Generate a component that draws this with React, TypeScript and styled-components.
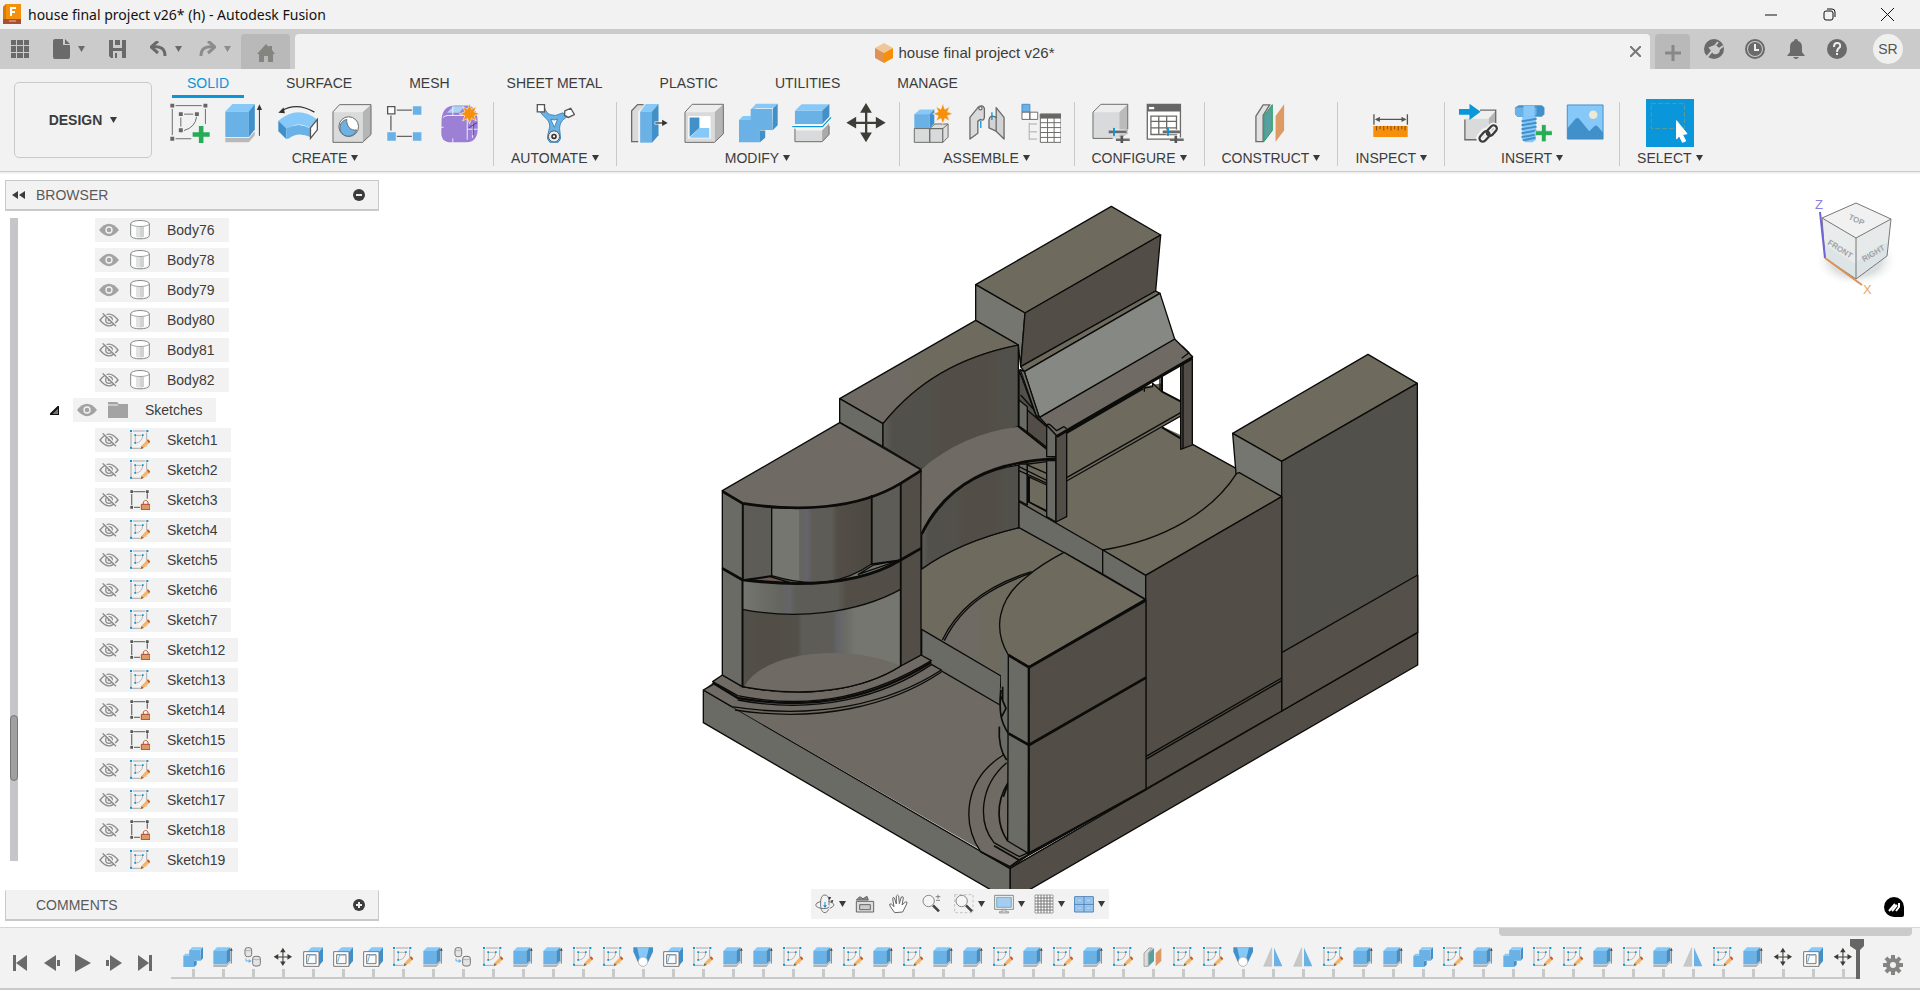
import React from 'react';
import styled, { createGlobalStyle } from 'styled-components';

const c = {
  chrome: '#f2f2f2',
  strip: '#cbcbcb',
  line: '#c8c9c9',
  ink: '#3c3c3c',
  accent: '#0a96da',
  icon: '#6a6a6a',
  top: '#86c9f9',
  front: '#6ab1e6',
  side: '#4290c9',
  grey: '#d9dadb',
  dark: '#6b6b68',
};

const GlobalStyle = createGlobalStyle`
  * { box-sizing: border-box; }
  html, body { margin: 0; padding: 0; }
  body { font-family: "Liberation Sans", Arial, sans-serif; font-size: 14px; line-height: 16px; color: ${c.ink}; background: #fff; }
  button { font: inherit; color: inherit; border: 0; padding: 0; margin: 0; background: none; cursor: pointer; }
  ul, ol { list-style: none; margin: 0; padding: 0; }
  svg { display: block; flex: none; }
`;

/* ---------- icons ---------- */

const Caret = ({ color = '#3a3a3a' }: { color?: string }) => (
  <svg width="7" height="6" viewBox="0 0 7 6"><path d="M0 0h7L3.5 6z" fill={color} /></svg>
);

const Plus = ({ x, y }: { x: number; y: number }) => (
  <path d={`M${x - 7} ${y - 26}h14v19h19v14h-19v19h-14v-19h-19v-14h19z`} fill="#27ab56" />
);

const Star = ({ x, y }: { x: number; y: number }) => (
  <path
    transform={`translate(${x} ${y})`}
    d="M0-32L6-14L21-22L14-6L31 0L14 6L21 22L6 14L0 31L-6 14L-21 22L-14 6L-31 0L-14-6L-21-22L-6-14Z"
    fill="#f78f0b" stroke="#f2f2f2" strokeWidth="2"
  />
);

const Sliders = () => (
  <g>
    <path d="M58 88h44M72 112h38" stroke="#f2f2f2" strokeWidth="14" />
    <path d="M50 88h54M72 112h42" stroke="#6b6b6b" strokeWidth="8" />
    <path d="M66 76v24" stroke={c.accent} strokeWidth="6" />
    <path d="M90 100v24" stroke="#555" strokeWidth="8" />
  </g>
);

const MoveShape = () => (
  <g fill="#3d3d38" stroke="none">
    <path d="M57 18h7v84h-7zM18 57h84v7H18z" />
    <path d="M60 0l18 30H42zM60 120l18-30H42zM0 60l30-18v36zM120 60L90 42v36z" />
  </g>
);

const CombineShape = () => (
  <g>
    <path d="M2 52L14 40H38V20L54 2H120L106 16H52V52z" fill={c.top} />
    <path d="M106 16L120 2V68L104 84H82V106L66 120V84L82 84H104z" fill={c.side} />
    <path d="M38 18h66v64H66v38H2V52h36z" fill={c.front} />
  </g>
);

const ribbonIcons: Record<string, React.ReactNode> = {
  sketch: (
    <g fill="none" stroke={c.dark} strokeWidth="3">
      <path d="M16 8h80M6 18v80M107 18v46M16 109h48M42 34h28M32 44v28M80 42Q76 74 42 84" />
      <g fill="#666" stroke="none">
        <path d="M0 2h12v12H0zM101 2h12v12h-12zM0 103h12v12H0zM26 28h12v12H26zM75 28h12v12H75zM26 77h12v12H26z" />
      </g>
      <g stroke="none"><Plus x={94} y={96} /></g>
    </g>
  ),
  extrude: (
    <g>
      <path d="M3 107h72l18-21v12l-18 22H3z" fill="#b9b9b9" />
      <path d="M3 26L25 3h68L75 26z" fill={c.top} />
      <path d="M3 26h72v78H3z" fill={c.front} />
      <path d="M75 26L93 3v78l-18 23z" fill={c.side} />
      <path d="M107 100V14" stroke="#333" strokeWidth="3" /><path d="M107 4l8 17H99z" fill="#333" />
    </g>
  ),
  revolve: (
    <g>
      <path d="M0 54Q58 4 119 50L98 78Q62 52 24 80z" fill={c.top} />
      <path d="M0 54L24 78V110L0 86z" fill={c.side} />
      <path d="M24 78Q62 56 98 78V104Q60 86 32 108L24 110z" fill={c.front} />
      <path d="M98 76L119 50V82L98 108z" fill="#fff" stroke="#555" strokeWidth="4" />
      <path d="M10 24Q56-4 110 28" fill="none" stroke="#333" strokeWidth="4" /><path d="M0 30L16 14l4 17z" fill="#333" />
    </g>
  ),
  hole: (
    <g stroke={c.dark} strokeWidth="3">
      <path d="M2 26L22 5H118L92 28z" fill="#ededed" stroke="none" />
      <path d="M92 28L118 5V96L92 121z" fill="#b5b5b5" stroke="none" />
      <path d="M2 28h90v92H2z" fill={c.grey} stroke="none" />
      <path d="M2 120V27L22 5H118V96L92 120z" fill="none" />
      <circle cx="50" cy="72" r="30" fill="#fff" />
      <path d="M44 50A26 26 0 1 0 74 82C56 86 42 70 44 50z" fill={c.front} />
    </g>
  ),
  pattern: (
    <g fill={c.front}>
      <path d="M32 22h46M32 102h46M14 38v46" stroke="#666" strokeWidth="4" />
      <path d="M81 10h26v26H81zM3 89h26v26H3zM81 89h26v26H81z" />
      <path d="M4 11h22v22H4z" fill="#fff" stroke="#555" strokeWidth="4" />
    </g>
  ),
  form: (
    <g>
      <path d="M4 48Q8 8 46 8H90Q114 20 114 60V82Q112 118 80 120H24Q2 114 3 90z" fill="#9b7ed4" />
      <path d="M20 30L40 10H74L58 30z" fill="#a9d3f2" />
      <path d="M8 46H80V112H8z" fill="#9c80d6" />
      <path d="M8 44Q14 38 24 38H70Q82 38 82 48V112M38 38V10M38 120V108M2 74H10M82 80H114M98 62V106" fill="none" stroke="#f0ecfa" strokeWidth="3" />
      <path d="M86 76L112 60M100 62V98" stroke="#5436a5" strokeWidth="3" />
      <Star x={89} y={33} />
    </g>
  ),
  automate: (
    <g stroke="#3c88bb" strokeWidth="3">
      <path d="M16 16L28 14C36 40 52 36 62 38L84 30L98 42C82 50 74 62 74 78L76 98A20 20 0 1 1 38 98L44 72C44 48 26 46 16 28z" fill={c.front} />
      <path d="M47 50Q58 54 68 49L58 74z" fill="#fff" />
      <circle cx="57" cy="102" r="17" fill="#eee" stroke="#555" /><circle cx="57" cy="102" r="6" fill="#fff" stroke="#333" strokeWidth="5" />
      <path d="M6 5h22v22H6zM90 24l18-8 11 19-18 9-12-6z" fill="#fff" stroke="#555" strokeWidth="4" />
    </g>
  ),
  presspull: (
    <g>
      <path d="M4 22L24 4H48L24 26V120H4z" fill={c.grey} /><path d="M40 5H22L4 24V118H24" fill="none" stroke={c.dark} strokeWidth="4" />
      <path d="M30 26L48 3H86L66 26z" fill={c.top} /><path d="M30 26H66V121H30z" fill={c.front} /><path d="M66 26L86 3V98L66 121z" fill={c.side} />
      <path d="M74 61h26" stroke="#fff" strokeWidth="9" /><path d="M76 61h26" stroke="#333" strokeWidth="4" /><path d="M97 51l17 10-17 9z" fill="#333" />
    </g>
  ),
  shell: (
    <g>
      <path d="M2 28L24 4H119L92 28z" fill="#ededed" /><path d="M92 28L119 4V94L92 120z" fill="#b5b5b5" /><path d="M2 28H92V120H2z" fill={c.grey} />
      <path d="M2 120V28L24 4H119V94L92 120z" fill="none" stroke={c.dark} strokeWidth="3" />
      <path d="M12 40H80V108H12z" fill="#fff" /><path d="M16 44H46V76L16 104z" fill={c.side} /><path d="M16 106L46 76H76V106z" fill={c.top} />
    </g>
  ),
  combine: <CombineShape />,
  split: (
    <g>
      <path d="M8 24L28 4H113L91 24z" fill={c.top} /><path d="M8 24H91V64H8z" fill={c.front} /><path d="M91 24L113 3V42L91 64z" fill={c.side} />
      <path d="M8 84H91L112 62V96L91 118H8z" fill={c.grey} /><path d="M91 84L112 62V96L91 118z" fill="#aaa" /><path d="M8 78V118H91L112 96V70" fill="none" stroke={c.dark} strokeWidth="3" />
      <path d="M0 72H92L118 44" fill="none" stroke="#fff" strokeWidth="10" /><path d="M0 72H92L118 44" fill="none" stroke={c.accent} strokeWidth="4" />
    </g>
  ),
  move: <MoveShape />,
  component: (
    <g>
      <path d="M3 34L20 20H66L50 34z" fill={c.top} /><path d="M3 34H50V78H3z" fill={c.front} /><path d="M50 34L64 20V62L50 78z" fill={c.side} />
      <path d="M3 78H50V120H3zM50 78H90V120H50z" fill={c.grey} stroke={c.dark} strokeWidth="3" /><path d="M50 78L66 64H106V104L90 120V78z" fill="#dedede" stroke={c.dark} strokeWidth="3" /><path d="M50 78h40l16-14" fill="none" stroke={c.dark} strokeWidth="3" />
      <Star x={90} y={33} />
    </g>
  ),
  joint: (
    <g stroke={c.dark} strokeWidth="4" strokeLinejoin="round">
      <path d="M8 44L34 12Q46 4 52 16V44Q50 56 40 50L32 56V92L8 110z" fill={c.grey} />
      <path d="M112 44L88 14V44L78 40Q68 40 66 52V76L88 86L112 110z" fill="#d2d3d4" />
      <path d="M88 42V88" /><circle cx="40" cy="16" r="5" fill="#fff" />
      <path d="M41 54V76M75 28V52" stroke={c.accent} />
    </g>
  ),
  assembly: (
    <g fill="none" stroke={c.dark} strokeWidth="3">
      <path d="M2 4H26V28H2z" fill={c.front} stroke={c.side} /><path d="M2 28H26V50H2zM26 28H50V50H26z" fill="#fff" />
      <path d="M24 60V112M24 64H48M24 88H48M24 110H48" stroke="#aaa" />
      <path d="M58 34H121V120H58z" fill="#fff" /><path d="M58 34H121V46H58z" fill="#666" />
      <path d="M58 60H121M58 75H121M58 90H121M58 105H121M80 46V120M100 46V120" />
    </g>
  ),
  configure: (
    <g>
      <path d="M2 28L26 4H108L82 28z" fill="#ededed" /><path d="M82 28L108 4V94L82 110z" fill="#bbb" /><path d="M2 28H82V108H2z" fill={c.grey} />
      <path d="M2 108V28L26 4H108V80M2 108H62" fill="none" stroke={c.dark} strokeWidth="3" />
      <Sliders />
    </g>
  ),
  table: (
    <g>
      <path d="M3 4H104V110H3z" fill="#fff" stroke={c.dark} strokeWidth="4" /><path d="M3 4H104V26H3z" fill="#666" /><path d="M8 12H24V19H8z" fill="#fff" />
      <path d="M14 40H92V96H14zM14 56H92M14 76H92M38 40V96M62 40V96" fill="none" stroke={c.dark} strokeWidth="4" />
      <Sliders />
    </g>
  ),
  plane: (
    <g>
      <path d="M14 40L36 6H56L36 38V118H14z" fill="#e2e2e2" stroke={c.dark} strokeWidth="4" />
      <path d="M38 40L64 5V84L38 118z" fill="#58a0a0" stroke="#27a060" strokeWidth="3" /><path d="M74 40L100 4V84L74 118z" fill="#dd9a64" />
    </g>
  ),
  measure: (
    <g>
      <path d="M8 34V66M110 34V66M14 50H104" stroke="#555" strokeWidth="4" /><path d="M11 50L26 42V58zM107 50L92 42V58z" fill="#555" />
      <path d="M6 70H111V104H6z" fill="#f78f0b" /><path d="M16 70V84M27 70V80M38 70V84M49 70V80M60 70V84M71 70V80M82 70V84M93 70V80M103 70V84" stroke="#774d18" strokeWidth="3" />
    </g>
  ),
  derive: (
    <g>
      <path d="M20 48L46 24H114L92 48z" fill="#efefef" /><path d="M92 48L114 24V90L92 112z" fill="#b5b5b5" /><path d="M20 48H92V112H20z" fill={c.grey} />
      <path d="M66 22H114V72M20 50V112H60" fill="none" stroke={c.dark} strokeWidth="4" />
      <path d="M2 18H34V2L68 27L34 52V36H2z" fill={c.accent} />
      <g fill="none" stroke="#f2f2f2" strokeWidth="17"><rect x="60" y="90" width="38" height="20" rx="10" transform="rotate(-48 79 100)" /><rect x="84" y="74" width="36" height="20" rx="10" transform="rotate(-48 102 84)" /></g>
      <g fill="none" stroke="#3a3a3a" strokeWidth="7"><rect x="62" y="92" width="36" height="20" rx="10" transform="rotate(-48 80 102)" /><rect x="84" y="74" width="36" height="20" rx="10" transform="rotate(-48 102 84)" /></g>
    </g>
  ),
  bolt: (
    <g>
      <path d="M8 14L20 7H90L98 14V34L90 42H16L8 34z" fill={c.side} /><path d="M8 14H74V34L66 42H16L8 34z" fill={c.front} /><path d="M34 8H68V42H34z" fill={c.top} />
      <path d="M30 42H72V112L62 120H40L30 112z" fill={c.top} />
      <path d="M28 56L74 48M28 68L74 60M28 80L74 72M28 92L74 84M28 104L74 96M32 114L70 106" stroke={c.side} strokeWidth="6" />
      <g stroke="#f2f2f2" strokeWidth="2"><Plus x={96} y={92} /></g>
    </g>
  ),
  image: (
    <g>
      <path d="M3 6H112V110H3z" fill={c.top} /><circle cx="82" cy="36" r="13" fill="#eee9d4" />
      <path d="M3 78L28 48Q36 42 42 52L70 86L86 70Q92 66 96 72L112 90V110H3z" fill={c.side} /><path d="M3 6H112V110H3z" fill="none" stroke={c.side} strokeWidth="3" />
    </g>
  ),
  select: (
    <g>
      <path d="M3 2H104V78H3z" fill="none" stroke="#5f9d92" strokeWidth="3" strokeDasharray="14 7" />
      <path d="M80 54L112 94L98 96L108 116L98 120L88 100L80 110z" fill="#fff" stroke="#fff" strokeWidth="3" />
    </g>
  ),
};

const smallIcons: Record<string, React.ReactNode> = {
  extrude: (
    <g>
      <path d="M1 53H40L52 40V46L40 60H1z" fill="#b5b5b5" /><path d="M1 12L12 1H52L40 12z" fill={c.top} /><path d="M1 12H40V52H1z" fill={c.front} /><path d="M40 12L52 1V40L40 52z" fill={c.side} />
      <path d="M55 50V6" stroke="#444" strokeWidth="2" /><path d="M55 2l4 9h-8z" fill="#444" />
    </g>
  ),
  sketch: (
    <g fill="none" stroke="#999" strokeWidth="2">
      <path d="M16 16H38Q38 36 16 40z" /><path d="M3 55H30M3 8V50M9 3H46M50 8V50" stroke="#858585" />
      <g fill={c.accent} stroke="none"><path d="M0 0h6v6H0zM49 0h6v6h-6zM0 50h6v6H0zM13 13h5v5h-5zM36 13h5v5h-5zM13 36h5v5h-5z" /></g>
      <path d="M33 48L50 30L60 38L42 54L30 58z" fill="#f4b566" stroke="#f2f2f2" /><path d="M50 31L54 28L61 35L57 40z" fill="#bd5b32" stroke="none" /><path d="M35 49L41 54L31 58z" fill="#666" stroke="none" />
    </g>
  ),
  locked: (
    <g fill="none" stroke="#777" strokeWidth="4">
      <path d="M10 5H46M5 12V46M52 10V26M12 52H30" />
      <path d="M1 1h8v8H1zM48 1h8v8h-8zM1 48h8v8H1z" fill="#555" stroke="none" />
      <path d="M40 44V36Q47 26 54 36V44" stroke="#b5623c" strokeWidth="3" /><path d="M34 43H60V59H34z" fill="#dd9a64" stroke="#b04a26" strokeWidth="3" />
    </g>
  ),
  body: (
    <g>
      <path d="M2 12C2-2 58-2 58 12V46C58 60 2 60 2 46z" fill="#fff" stroke="#888" strokeWidth="3" /><path d="M18 20H42V51Q30 54 18 51z" fill="#e0e2e4" /><path d="M30 20H42V51L30 52z" fill="#d0d2d4" />
      <path d="M2 12C6 22 54 22 58 12" fill="none" stroke="#777" strokeWidth="2" />
    </g>
  ),
  combine: <g transform="scale(.5)"><CombineShape /></g>,
  move: <g transform="translate(2 2) scale(.46)"><MoveShape /></g>,
  paste: (
    <g fill="#e4e4e4" stroke="#777" strokeWidth="3">
      <rect x="6" y="2" width="20" height="27" rx="7" /><rect x="29" y="28" width="23" height="29" rx="7" />
      <path d="M7 9Q16 14 25 9M30 36Q40 41 51 36" fill="none" stroke="#999" strokeWidth="2" />
      <path d="M9 34V42H18" fill="none" stroke={c.front} /><path d="M17 36l9 6-9 6z" fill={c.front} stroke="none" />
    </g>
  ),
  frame: (
    <g>
      <path d="M12 14L26 1H60L46 14z" fill={c.top} /><path d="M48 14L60 1V42L48 56z" fill={c.side} />
      <path d="M2 14H48V58H2z" fill="#fff" stroke="#777" strokeWidth="3" /><path d="M11 23H39V50H11z" fill="#fafafa" stroke="#777" strokeWidth="3" /><path d="M14 46L20 24H36" fill="none" stroke={c.front} strokeWidth="3" />
    </g>
  ),
  loft: (
    <g>
      <path d="M1 1H60V14L46 44H14L1 14z" fill={c.side} /><path d="M12 1H48L40 34H20z" fill={c.top} /><circle cx="30" cy="44" r="14" fill="#fff" stroke="#999" strokeWidth="2" />
    </g>
  ),
  mirror: <g><path d="M26 2V58H2z" fill="#c8c8c8" stroke="#aaa" /><path d="M33 2L58 58H33z" fill={c.front} /></g>,
  plane: (
    <g>
      <path d="M3 18L18 3H28L16 18V58H3z" fill="#ddd" stroke="#888" strokeWidth="2" /><path d="M17 18L33 3V42L17 58z" fill="#58a0a0" /><path d="M38 18L55 3V42L38 58z" fill="#dd9a64" />
    </g>
  ),
};

const RibbonIcon = ({ name }: { name: string }) => (
  <svg width="40" height="40" viewBox="0 0 120 122" aria-hidden="true">{ribbonIcons[name]}</svg>
);
const SmallIcon = ({ name }: { name: string }) => (
  <svg width="20" height="20" viewBox="0 0 60 60" aria-hidden="true">{smallIcons[name]}</svg>
);

const Eye = ({ off }: { off?: boolean }) => (
  <svg width="20" height="14" viewBox="0 0 60 42" aria-hidden="true">
    {off ? (
      <g fill="none" stroke="#8c8c8c" strokeWidth="4">
        <path d="M3 21Q30-14 57 21Q30 56 3 21z" /><circle cx="30" cy="21" r="10" /><circle cx="30" cy="21" r="2" /><path d="M15 0L55 39" stroke="#f2f2f2" strokeWidth="4" /><path d="M11 1L51 40" />
      </g>
    ) : (
      <g><path d="M0 21Q30-16 60 21Q30 58 0 21z" fill="#a3a3a3" /><circle cx="30" cy="21" r="9" fill="#a3a3a3" stroke="#f2f2f2" strokeWidth="4" /></g>
    )}
  </svg>
);

/* ---------- window chrome ---------- */

const Page = styled.div`display: flex; flex-direction: column; min-height: 100vh; background: #fff;`;

const TitleBar = styled.header`
  display: flex; align-items: center; justify-content: space-between; height: 29px; padding: 0 4px 0 3px; background: ${c.chrome};
`;
const WindowTitle = styled.div`
  display: flex; align-items: center; gap: 6px; font-family: "Noto Sans", "Open Sans", sans-serif; font-size: 14px; color: #111;
`;
const WindowControls = styled.div`display: flex;`;
const WindowButton = styled.button`width: 58px; height: 28px; display: grid; place-items: center;`;

const AppBar = styled.div`display: flex; align-items: stretch; height: 40px; padding-top: 5px; background: ${c.strip};`;
const QuickTools = styled.div`display: flex; align-items: center; gap: 24px; padding: 0 10px 5px 11px;`;
const QuickButton = styled.button`display: flex; align-items: center; gap: 8px; height: 20px;`;
const UndoPair = styled.div`display: flex; gap: 17px;`;
const StripTab = styled.button<{ $width: number }>`
  width: ${p => p.$width}px; padding-top: 3px; display: grid; place-items: center; background: #b9b9b9; border-radius: 4px 4px 0 0;
`;
const DocTab = styled.div`
  flex: 1; margin: 0 5px; padding-right: 16px; display: flex; align-items: center; justify-content: center; position: relative;
  background: ${c.chrome}; border-radius: 4px 4px 0 0;
`;
const DocName = styled.div`display: flex; align-items: center; gap: 6px; padding-top: 2px; font-size: 15px;`;
const CloseTab = styled.button`position: absolute; right: 9px; top: 12px;`;
const Account = styled.div`display: flex; align-items: center; gap: 21px; padding: 0 17px 5px 14px;`;
const Avatar = styled.button`width: 30px; height: 30px; margin-left: 5px; border-radius: 50%; background: #f0f0ee; color: #555;`;

/* ---------- ribbon ---------- */

const Ribbon = styled.div`
  display: flex; align-items: flex-start; height: 105px; background: ${c.chrome};
  border-bottom: 2px solid ${c.chrome}; box-shadow: inset 0 -1px 0 ${c.line};
`;
const Workspace = styled.button`
  display: flex; align-items: center; justify-content: center; gap: 8px; width: 138px; height: 76px; margin: 13px 5px 0 14px;
  border: 1px solid #c6cac9; border-radius: 5px; font-weight: bold;
`;
const RibbonTabs = styled.div`display: flex; gap: 27px; padding-left: 15px; height: 30px;`;
const RibbonTab = styled.button<{ $active?: boolean }>`
  height: 29px; padding: 1px 15px 0; color: ${p => (p.$active ? c.accent : c.ink)};
  border-bottom: 3px solid ${p => (p.$active ? c.accent : 'transparent')};
`;
const Groups = styled.div`display: flex; padding-top: 3px;`;
const Group = styled.section`
  display: flex; flex-direction: column; align-items: center; justify-content: space-between; height: 64px; padding: 1px 13px 0;
  border-right: 1px solid ${c.line};
  &:last-child { border-right: 0; }
`;
const GroupIcons = styled.div`display: flex; gap: 14px; height: 40px;`;
const ToolButton = styled.button<{ $active?: boolean }>`
  display: grid; place-items: center; width: ${p => (p.$active ? 48 : 40)}px; height: ${p => (p.$active ? 48 : 40)}px;
  margin-top: ${p => (p.$active ? -4 : 0)}px; background: ${p => (p.$active ? c.accent : 'none')};
`;
const GroupLabel = styled.button`display: flex; align-items: center; gap: 4px; padding: 0 4px;`;

const groups: { label: string; icons: string[] }[] = [
  { label: 'CREATE', icons: ['sketch', 'extrude', 'revolve', 'hole', 'pattern', 'form'] },
  { label: 'AUTOMATE', icons: ['automate'] },
  { label: 'MODIFY', icons: ['presspull', 'shell', 'combine', 'split', 'move'] },
  { label: 'ASSEMBLE', icons: ['component', 'joint', 'assembly'] },
  { label: 'CONFIGURE', icons: ['configure', 'table'] },
  { label: 'CONSTRUCT', icons: ['plane'] },
  { label: 'INSPECT', icons: ['measure'] },
  { label: 'INSERT', icons: ['derive', 'bolt', 'image'] },
  { label: 'SELECT', icons: ['select'] },
];
const tabs = ['SOLID', 'SURFACE', 'MESH', 'SHEET METAL', 'PLASTIC', 'UTILITIES', 'MANAGE'];

/* ---------- viewport ---------- */

const Viewport = styled.main`flex: 1; display: flex; position: relative; background: #fff;`;
const ModelSvg = styled.svg`position: absolute; left: 0; top: 0; width: 100%; height: calc(100% - 38px); overflow: hidden;`;
const Sidebar = styled.aside`position: relative; display: flex; flex-direction: column; width: 374px; margin: 6px 0 6px 5px;`;
const PanelBar = styled.div<{ $open?: boolean }>`
  display: flex; align-items: center; height: 31px; padding: 0 13px 0 6px; background: ${c.chrome}; color: #5a5a5a;
  border: 1px solid ${c.line}; border-bottom-width: 2px; border-top-color: ${p => (p.$open ? c.line : c.chrome)};
`;
const CollapseSlot = styled.button`width: 24px; display: flex;`;
const PanelTitle = styled.h2`flex: 1; margin: 0; font-size: 14px; font-weight: normal;`;
const TreeArea = styled.div`flex: 1; display: flex; padding: 7px 0 12px 5px;`;
const TreeScroll = styled.div`width: 8px; margin-bottom: 17px; padding-top: 497px; background: #c5c5ca;`;
const TreeThumb = styled.div`height: 66px; background: #a0a0a0; border: 1px solid #777; border-radius: 4px;`;
const TreeList = styled.ul`display: flex; flex-direction: column; gap: 6px; padding-left: 15px;`;
const TreeItem = styled.li<{ $parent?: boolean }>`
  display: flex; align-items: center; height: 24px; padding-left: ${p => (p.$parent ? 0 : 62)}px;
`;
const Expander = styled.button`display: flex; width: 23px; margin-left: 17px;`;
const TreeNode = styled.div`display: flex; align-items: center; height: 24px; min-width: 134px; padding: 0 13px 0 4px; background: ${c.chrome};`;
const EyeButton = styled.button`display: flex; margin-right: 11px;`;
const NodeName = styled.button`margin-left: 17px; white-space: nowrap;`;

const NavBar = styled.div`
  position: absolute; left: 50%; bottom: 8px; transform: translateX(-50%); display: flex; align-items: center; gap: 9px;
  height: 30px; padding: 0 4px; background: ${c.chrome};
`;
const NavButton = styled.button<{ $caret?: boolean }>`
  display: flex; align-items: center; gap: 4px; margin-right: ${p => (p.$caret ? 0 : 4)}px;
`;
const CubeSvg = styled.svg`position: absolute; right: 20px; top: 16px;`;
const Assistant = styled.button`
  position: absolute; right: 16px; bottom: 10px; width: 20px; height: 20px; border-radius: 10px 10px 2px 10px; background: #000;
  display: grid; place-items: center;
`;

type Node = { name: string; icon: string; hidden?: boolean; parent?: boolean };
const locked = [3, 12, 14, 15, 18];
const tree: Node[] = [
  ...[76, 78, 79, 80, 81, 82].map(n => ({ name: `Body${n}`, icon: 'body', hidden: n >= 80 })),
  { name: 'Sketches', icon: 'folder', parent: true },
  ...[1, 2, 3, 4, 5, 6, 7, 12, 13, 14, 15, 16, 17, 18, 19].map(n => ({
    name: `Sketch${n}`, icon: locked.includes(n) ? 'locked' : 'sketch', hidden: true,
  })),
];

const T = '#6e6a5e';
const W = '#6f6a63';
const D = '#524d46';
const O = '#52504a';
const G = '#6a6b65';
const L = '#757670';

const Model = () => (
  <ModelSvg viewBox="-2100 -48 5760 2145" preserveAspectRatio="xMidYMin slice" aria-label="Model">
    <defs>
      <linearGradient id="drum" x1="0" x2="1">
        <stop offset="0" stopColor={L} /><stop offset=".27" stopColor={L} /><stop offset=".28" stopColor="#64655f" /><stop offset=".36" stopColor="#64646a" />
        <stop offset=".41" stopColor="#5d5c56" /><stop offset=".6" stopColor="#5d5c56" /><stop offset=".66" stopColor={D} /><stop offset="1" stopColor="#4d4942" />
      </linearGradient>
      <linearGradient id="band" x1="0" x2="1">
        <stop offset="0" stopColor={L} /><stop offset=".24" stopColor="#64655f" /><stop offset=".3" stopColor="#64646a" /><stop offset=".34" stopColor="#5d5c56" /><stop offset=".6" stopColor="#5d5c56" /><stop offset=".66" stopColor={D} /><stop offset="1" stopColor={D} />
      </linearGradient>
      <linearGradient id="inside" x1="0" x2="1">
        <stop offset="0" stopColor={O} /><stop offset=".15" stopColor={D} /><stop offset=".35" stopColor={O} /><stop offset=".38" stopColor="#5d5c56" /><stop offset=".57" stopColor="#5d5c56" /><stop offset=".6" stopColor="#64646a" /><stop offset=".65" stopColor={G} /><stop offset=".72" stopColor={L} /><stop offset="1" stopColor={L} />
      </linearGradient>
      <linearGradient id="niche" x1="0" x2="1">
        <stop offset="0" stopColor="#5d5c56" /><stop offset=".07" stopColor={O} /><stop offset=".36" stopColor={O} /><stop offset=".44" stopColor={D} /><stop offset=".75" stopColor={D} /><stop offset=".85" stopColor={O} /><stop offset="1" stopColor={O} />
      </linearGradient>
      <linearGradient id="warm" x1="0" x2="1"><stop offset="0" stopColor={W} /><stop offset=".35" stopColor={W} /><stop offset=".5" stopColor={T} /><stop offset="1" stopColor={T} /></linearGradient>
    </defs>
    <g stroke="#0b0b0a" strokeWidth="4" strokeLinejoin="round" fill="none">
      {/* base slab */}
      <path d="M930 2035L2153 1327V1425L930 2133z" fill={D} />
      <path d="M10 1500L930 2035V2133L10 1598z" fill={G} />
      <path d="M10 1500L67 1460L665 1137L957 1013L1400 1200L1337 1797L930 2030z" fill={W} stroke="none" />
      {/* courtyard floor */}
      <path d="M665 1137Q780 1055 957 1013L1400 1230L1000 1530L665 1320z" fill={T} stroke="none" />
      <path d="M727 1350C780 1240 880 1180 995 1145L1000 1540L903 1458z" fill="url(#warm)" stroke="none" />
      <path d="M665 1137Q780 1055 957 1013M727 1350C780 1240 880 1180 995 1145" />
      <path d="M733 1352C790 1236 890 1186 990 1150" />
      <path d="M665 1318L903 1458L900 1545L665 1408z" fill={G} />
      {/* upper floor */}
      <path d="M957 935V700L1160 620L1385 580L1390 606L1442 634V745L1478 763L1610 835L1610 850C1540 960 1400 1050 1208 1080z" fill={T} stroke="none" />
      <path d="M1478 763L1608 835" />
      {/* rear block */}
      <path d="M827 284L1234 49L1382 135L975 369z" fill={T} />
      <path d="M827 284L975 369L962 530L955 465L827 391z" fill={L} />
      <path d="M975 369L1382 135L1367 303L962 530z" fill={D} />
      {/* niche block */}
      <path d="M419 626L827 391L955 465C780 500 650 575 549 701z" fill="url(#warm)" />
      <path d="M419 626L549 701V770L419 697z" fill={G} />
      <path d="M549 701C650 575 780 500 955 465V710L800 760L663 838L549 770z" fill="url(#niche)" />
      <path d="M663 838Q790 730 955 710L1068 800C880 815 740 870 665 1030z" fill={W} stroke="none" />
      <path d="M955 710L1068 800" />
      <path d="M665 1035C740 890 850 840 957 825V1013Q780 1055 665 1137z" fill="url(#niche)" />
      <path d="M665 1032C740 875 880 815 1068 806" strokeWidth="8" />
      <path d="M957 935L1208 1080V1152L957 1013z" fill={G} />
      {/* bench frame */}
      <path d="M957 540L1010 682L1070 735V800L957 710z" fill={O} />
      <path d="M982 660L1040 710V772L982 726z" fill={D} />
      <path d="M957 630L982 650V726L957 708zM957 822H982V945L957 932z" fill={G} />
      <path d="M985 822L1040 815V850L985 826zM985 860L1040 885V962L985 935z" fill={T} />
      <path d="M957 830L1068 885M957 842L1068 892M985 935L1040 965M982 820V945M988 860V935M962 615L1070 735" />
      <path d="M1040 705L1068 735V800H1040zM1040 812H1068V996L1040 980z" fill={G} />
      <path d="M1068 740L1100 715V980L1068 996z" fill={D} />
      <path d="M1386 562L1442 532V632L1386 605zM1388 710L1442 680V735z" fill="#fff" stroke="none" />
      <path d="M1386 605L1442 634M1386 712L1442 745M1386 560V605" strokeWidth="6" />
      <path d="M1380 565V600M1358 578V590L1333 594V605M1358 580L1386 606" />
      <path d="M1100 863L1442 668M1100 873L1442 678" />
      <path d="M1442 515L1477 500V765L1442 778z" fill={D} />
      <path d="M1449 510V775" />
      <path d="M962 530L1367 303L1380 310L973 545z" fill={T} />
      <path d="M1018 682L1424 447L1478 500L1070 737L1040 705z" fill={W} />
      <path d="M1070 740L1478 505M1100 728L1330 595" strokeWidth="7" />
      <path d="M1040 705Q1046 700 1052 706L1070 722L1092 710L1100 716M1446 468L1467 488L1445 505" strokeWidth="4" />
      <path d="M973 545L1380 310L1424 447L1018 682z" fill="#868983" />
      <path d="M960 538L973 545L1018 682L1008 675z" fill={G} />
      {/* right tower */}
      <path d="M1598 730L2004 493L2152 580L1745 814z" fill={T} />
      <path d="M1598 730L1745 814V920L1608 850z" fill={L} />
      <path d="M1745 814L2152 580L2153 1327L1745 1563z" fill={O} />
      <path d="M1745 1388L2153 1155V1327L1745 1563z" fill="#55514a" />
      {/* middle block */}
      <path d="M1208 1080C1400 1050 1540 960 1610 850L1618 848L1745 920L1337 1156z" fill={T} />
      <path d="M1208 1080L1337 1156V1228L1208 1152z" fill={G} />
      <path d="M1337 1156L1745 920V1563L1337 1797z" fill={D} />
      <path d="M1337 1700L1745 1464M1337 1708L1745 1472" />
    </g>
    <g transform="translate(-30 1050)" stroke="#0b0b0a" strokeWidth="4" strokeLinejoin="round" fill="none">
      {/* curved steps by the bay */}
      <path d="M40 450L97 405L693 345L724 375L754 390C600 490 380 550 125 500z" fill={W} stroke="none" />
      <path d="M40 450L70 433M40 450L125 500M125 500C380 540 600 490 754 390L724 373" />
      <path d="M135 510C380 548 600 500 754 396" />
      <path d="M68 425L97 405L157 440C350 475 520 450 632 378L693 345L724 362C560 460 380 515 143 467z" fill={W} />
      <path d="M68 428L143 474C380 515 560 470 724 367" strokeWidth="7" /><path d="M143 480C380 525 580 470 724 374" />
      {/* bay interior */}
      <path d="M157 120L632 60V378C500 455 340 475 157 440z" fill="url(#inside)" />
      <path d="M163 440C220 330 480 310 632 378C500 455 340 475 163 440z" fill={W} stroke="none" />
      <path d="M157 440C350 475 520 450 632 378" />
      <path d="M157 120C300 135 480 145 632 60V148C500 220 320 240 157 208z" fill="url(#band)" />
      <path d="M97 85L157 120V440L97 405z" fill={G} /><path d="M632 60L693 25V345L632 378z" fill={D} />
      {/* bay drum */}
      <path d="M158-110L245-97V107L158 120z" fill="#5d5c56" />
      <path d="M245-97Q400-90 545-135V72C460 130 370 145 245 107z" fill="url(#drum)" />
      <path d="M545-135L632-170V60L545 72z" fill="#5d5c56" /><path d="M632-170L693-210V25L632 60z" fill={D} />
      <path d="M97-148L158-110V120L97 85z" fill={G} />
      <path d="M180 120L240 110L300 128z" fill="#6a5a52" /><path d="M505 103L550 75L625 62z" fill={L} />
      <path d="M97-148L449-352L693-210L632-170C500-90 320-85 158-110z" fill={W} />
      <path d="M97-146L158-110C320-85 500-90 632-170L693-208M97 85L158 120C320 140 500 140 632 60L693 25" strokeWidth="8" />
      <path d="M158-108V440M632-168V378M545-135V72" strokeWidth="5" />
      {/* front corner curved steps */}
      <path d="M940 645C820 720 815 850 872 935L960 985L1015 945L953 640z" fill={W} />
      <path d="M950 668C865 740 865 850 912 908L988 950L1015 938" /><path d="M912 917L987 960L1015 945M872 935L960 980L990 958" strokeWidth="5" />
      <path d="M953 730C915 790 922 860 953 903" strokeWidth="5" /><path d="M957 723L940 770" strokeWidth="5" />
      <path d="M933 320L955 345V660C925 630 922 570 930 540C932 500 925 470 933 440z" fill={G} stroke="none" />
      <path d="M933 450C925 520 935 550 955 580M928 560C925 610 935 640 950 660M933 470L948 505L935 530M938 440V480" strokeWidth="5" />
      {/* front half moon block */}
      <path d="M1017 382L1368 180V747L1017 945z" fill={D} />
      <path d="M955 345L1017 382L1015 940L953 903z" fill={G} />
      <path d="M1122 37L1365 178L1017 380L955 345C910 270 920 180 1010 110Q1050 75 1122 37z" fill={T} />
      <path d="M955 345L1017 382L1366 182M955 580L1017 615L1368 413" strokeWidth="8" />
      <path d="M1016 384V940L1368 748" strokeWidth="6" />
    </g>
  </ModelSvg>
);

const ViewCube = () => (
  <CubeSvg width="90" height="112" viewBox="0 0 90 112" aria-label="View cube">
    <defs><radialGradient id="shade"><stop offset=".6" stopColor="#dcdfe0" /><stop offset="1" stopColor="#fff" stopOpacity="0" /></radialGradient></defs>
    <ellipse cx="46" cy="70" rx="42" ry="27" fill="url(#shade)" />
    <path d="M12 28L46 13L81 29L46 48z" fill="#f1f1f1" /><path d="M12 28L46 48V89L15 68z" fill="#e9ecec" /><path d="M46 48L81 29L77 66L46 89z" fill="#e6eaea" />
    <path d="M14 54L46 74V89L15 68z" fill="#dde4e6" /><path d="M46 72L78 52L77 66L46 89z" fill="#dde4e6" />
    <path d="M12 28L46 13L81 29L46 48zM81 29L77 66L46 89V48M12 28L15 68L46 89" fill="none" stroke="#777" />
    <path d="M10 22L15 68" stroke="#6f62d8" strokeWidth="2" /><path d="M15 68L52 95" stroke="#de9254" strokeWidth="2" />
    <g fontFamily="Liberation Sans, sans-serif" fontWeight="bold" fontSize="8" fill="#a0a3a5">
      <text x="38" y="29" transform="rotate(24 38 29)">TOP</text>
      <text x="17" y="54" transform="rotate(32 17 54)">FRONT</text>
      <text x="54" y="72" transform="rotate(-31 54 72)">RIGHT</text>
    </g>
    <g fontFamily="Liberation Sans, sans-serif" fontSize="13">
      <text x="5" y="19" fill="#8a7fe0">Z</text><text x="53" y="104" fill="#efa561">X</text>
    </g>
  </CubeSvg>
);

const Lens = () => (
  <g><path d="M36 34L54 52" stroke="#444" strokeWidth="8" /><circle cx="23" cy="21" r="17" fill="#f4f6f7" stroke="#888" strokeWidth="3" /></g>
);
const navIcons: { label: string; caret?: boolean; art: React.ReactNode }[] = [
  { label: 'Orbit', caret: true, art: <g fill="none" stroke="#777" strokeWidth="3"><path d="M18 22Q2 26 2 33Q4 43 30 44Q44 42 42 38M40 22Q58 28 57 33Q54 40 44 43M17 22Q18 3 30 3Q40 4 42 18V34M17 22V38Q20 57 31 56Q38 54 41 46" /><path d="M30 24V38" stroke={c.accent} /><path d="M30 42l-6-8h12z" fill={c.accent} stroke="none" /><path d="M40 8l9 2-6 8zM46 20l9-2-3 9z" fill="#333" stroke="none" /></g> },
  { label: 'Look at', art: <g fill="#ddd" stroke="#666" strokeWidth="3"><path d="M4 22H56V54H4z" /><path d="M14 32H46V47H14z" fill="#ccc" /><path d="M4 18L14 8L24 14L36 7L40 18z" fill="#888" /></g> },
  { label: 'Pan', art: <path d="M20 56L6 36Q2 28 10 30L18 38L14 14Q14 8 19 12L25 30V6Q29 0 32 6L34 29L40 9Q46 6 46 12L42 33L52 24Q60 22 56 30L44 54z" fill="#fff" stroke="#666" strokeWidth="3" /> },
  { label: 'Zoom', art: <g><Lens /><path d="M44 8H58M51 2V14M45 19H57" stroke="#555" strokeWidth="2" /></g> },
  { label: 'Zoom window', caret: true, art: <g><path d="M2 2H57V56H2z" fill="none" stroke="#aaa" strokeWidth="2" strokeDasharray="8 6" /><Lens /></g> },
  { label: 'Display settings', caret: true, art: <g><path d="M2 4H58V46H2z" fill="#f7f7f7" stroke="#888" strokeWidth="3" /><path d="M8 10H52V40H8z" fill="#a4cdf0" stroke="#4a9a9a" strokeWidth="2" /><path d="M24 46H36V53H44V57H16V53H24z" fill="#ccc" stroke="#888" strokeWidth="2" /></g> },
  { label: 'Grid and snaps', caret: true, art: <g><path d="M3 3H57V57H3z" fill="#fff" stroke="#777" strokeWidth="2" /><path d="M12 3V57M21 3V57M30 3V57M39 3V57M48 3V57M3 12H57M3 21H57M3 30H57M3 39H57M3 48H57" stroke="#777" strokeWidth="3" /></g> },
  { label: 'Viewports', caret: true, art: <g fill="#a9cff0" stroke="#4a7fb8" strokeWidth="3"><path d="M2 8H58V54H2zM30 8V54M2 31H58" /><path d="M9 14H24V25H9zM36 14H51V25H36zM9 37H24V48H9zM36 37H51V48H36z" fill="none" stroke="#79aedb" strokeWidth="2" /></g> },
];

/* ---------- timeline ---------- */

const Timeline = styled.footer`
  position: relative; display: flex; height: 63px; background: ${c.chrome}; border-top: 1px solid #d5d8d8; border-bottom: 2px solid ${c.line};
`;
const Transport = styled.div`display: flex; align-items: center; gap: 15px; padding: 10px 18px 0 13px;`;
const TransportButton = styled.button`display: flex;`;
const Track = styled.ol`display: flex; padding: 19px 0 0 7px; margin-bottom: 9px; border-bottom: 2px solid ${c.line};`;
const Feature = styled.li`
  display: flex; flex-direction: column; align-items: center; justify-content: space-between; width: 30px;
  &::after { content: ''; width: 3px; height: 8px; background: ${c.line}; }
`;
const Marker = styled.div`position: relative; margin: 11px 0 9px -8px; width: 14px; height: 40px;`;
const TimelineScroll = styled.div`position: absolute; right: 8px; top: 0; width: 413px; height: 8px; background: ${c.strip}; border-radius: 0 0 4px 4px;`;
const Gear = styled.button`margin: 13px 17px 0 auto; display: flex; align-items: center;`;

const featureKinds: Record<string, string> = {
  e: 'extrude', s: 'sketch', c: 'combine', p: 'paste', m: 'move', f: 'frame', o: 'loft', t: 'mirror', q: 'plane',
};
const features = [...'cepmfffsepseessofseesesesees' + 'esesqssottseecsecssesetsemfm'];

const transport = [
  ['First', 'M0 0h3v16H0zM14 0v16L3 8z'],
  ['Previous', 'M12 0v16L0 8zM13 5h3v6h-3z'],
  ['Play', 'M0-1L16 8L0 17z'],
  ['Next', 'M4 0l12 8L4 16zM0 5h3v6H0z'],
  ['Last', 'M1 0l11 8L1 16zM12 0h3v16h-3z'],
];

export default function App() {
  return (
    <Page>
      <GlobalStyle />
      <TitleBar>
        <WindowTitle>
          <svg width="19" height="21" viewBox="0 0 19 21"><path d="M3 0h15v18l-3 2H0V3z" fill="#f5900c" /><path d="M0 15h18v5H0z" fill="#a94f32" /><path d="M0 3L3 0V15H0z" fill="#d87a0a" /><path d="M8 12V4h5M8 8h4" stroke="#fff" strokeWidth="2" fill="none" /><path d="M6 17h7" stroke="#e9c3a8" strokeWidth="1" /></svg>
          house final project v26* (h) - Autodesk Fusion
        </WindowTitle>
        <WindowControls>
          <WindowButton aria-label="Minimize"><svg width="12" height="12"><path d="M0 6h12" stroke="#111" /></svg></WindowButton>
          <WindowButton aria-label="Restore"><svg width="13" height="13" fill="none" stroke="#111"><rect x="1" y="3" width="9" height="9" rx="2" /><path d="M4 1h5q3 0 3 3v5" /></svg></WindowButton>
          <WindowButton aria-label="Close"><svg width="13" height="13"><path d="M0 0L13 13M13 0L0 13" stroke="#111" /></svg></WindowButton>
        </WindowControls>
      </TitleBar>

      <AppBar>
        <QuickTools>
          <QuickButton aria-label="Data panel"><svg width="18" height="18" fill={c.icon}><path d="M0 0h5v5H0zM6 0h6v5H6zM13 0h5v5h-5zM0 6h5v6H0zM6 6h6v6H6zM13 6h5v6h-5zM0 13h5v5H0zM6 13h6v5H6zM13 13h5v5h-5z" /></svg></QuickButton>
          <QuickButton aria-label="File"><svg width="17" height="20" fill={c.icon}><path d="M2 0h8v6h7v12q0 2-2 2H2q-2 0-2-2V2q0-2 2-2zM12 0l5 5h-5z" /></svg><Caret color={c.icon} /></QuickButton>
          <QuickButton aria-label="Save"><svg width="17" height="18"><path d="M0 0h17v18H2l-2-2z" fill={c.icon} /><path d="M4 0h9v8H4zM4 11h9v7H4z" fill={c.strip} /><path d="M6 0h5v5H6zM6 13h2v5H6z" fill={c.icon} /></svg></QuickButton>
          <UndoPair>
            <QuickButton aria-label="Undo"><svg width="17" height="16"><path d="M2 6q13-2 13 9" fill="none" stroke={c.icon} strokeWidth="3" /><path d="M8 0L1 6L8 12" fill="none" stroke={c.icon} strokeWidth="3" /></svg><Caret color={c.icon} /></QuickButton>
            <QuickButton aria-label="Redo"><svg width="17" height="16"><path d="M15 6Q2 4 2 15" fill="none" stroke="#8c8c8a" strokeWidth="3" /><path d="M9 0L16 6L9 12" fill="none" stroke="#8c8c8a" strokeWidth="3" /></svg><Caret color="#8c8c8a" /></QuickButton>
          </UndoPair>
        </QuickTools>
        <StripTab $width={49} aria-label="Home"><svg width="18" height="18" fill="#85857f"><path d="M9 0l3 3V2h3v4l3 4h-2v8h-5v-6H7v6H2v-8H0z" /></svg></StripTab>
        <DocTab>
          <DocName>
            <svg width="18" height="20" viewBox="0 0 18 20"><path d="M0 5L9 0l9 5-9 5z" fill="#f0c898" /><path d="M0 5l9 5v10L0 15z" fill="#de9254" /><path d="M18 5l-9 5v10l9-5z" fill="#f78f0b" /></svg>
            house final project v26*
          </DocName>
          <CloseTab aria-label="Close document"><svg width="11" height="11"><path d="M0 0L11 11M11 0L0 11" stroke="#777" strokeWidth="2" /></svg></CloseTab>
        </DocTab>
        <StripTab $width={35} aria-label="New document"><svg width="16" height="16"><path d="M8 0v16M0 8h16" stroke="#888" strokeWidth="3" /></svg></StripTab>
        <Account>
          <QuickButton aria-label="Extensions"><svg width="20" height="20"><circle cx="10" cy="10" r="10" fill={c.icon} /><path d="M6 9l4 5q5 1 5-4l-4-3zM3 18l5-6M10 8l4-5M14 11l5-4" stroke={c.strip} strokeWidth="2" fill={c.strip} /></svg></QuickButton>
          <QuickButton aria-label="Job status"><svg width="20" height="20"><circle cx="10" cy="10" r="9" fill="none" stroke={c.icon} strokeWidth="2" /><circle cx="10" cy="10" r="7" fill={c.icon} /><path d="M10 5v6h4" stroke="#eee" strokeWidth="2" fill="none" /></svg></QuickButton>
          <QuickButton aria-label="Notifications"><svg width="20" height="20" fill={c.icon}><path d="M10 0q2 0 2 2 4 1 4 6v5l3 4H1l3-4V8q0-5 4-6 0-2 2-2zM7 18h6q-3 4-6 0z" /></svg></QuickButton>
          <QuickButton aria-label="Help"><svg width="20" height="20"><circle cx="10" cy="10" r="10" fill={c.icon} /><path d="M7 8q0-4 3-4 4 0 3 4-3 2-3 5M10 14v2" stroke="#eee" strokeWidth="2" fill="none" /></svg></QuickButton>
          <Avatar aria-label="Account SR">SR</Avatar>
        </Account>
      </AppBar>

      <Ribbon>
        <Workspace>DESIGN <Caret /></Workspace>
        <div>
          <RibbonTabs>{tabs.map((t, i) => <RibbonTab key={t} $active={i === 0}>{t}</RibbonTab>)}</RibbonTabs>
          <Groups>
            {groups.map(g => (
              <Group key={g.label}>
                <GroupIcons>
                  {g.icons.map(i => <ToolButton key={i} $active={i === 'select'} aria-label={i}><RibbonIcon name={i} /></ToolButton>)}
                </GroupIcons>
                <GroupLabel>{g.label} <Caret /></GroupLabel>
              </Group>
            ))}
          </Groups>
        </div>
      </Ribbon>

      <Viewport>
        <Model />
        <Sidebar>
          <PanelBar $open>
            <CollapseSlot aria-label="Collapse browser"><svg width="13" height="8" fill={c.ink}><path d="M6 0v8L0 4zM13 0v8L7 4z" /></svg></CollapseSlot>
            <PanelTitle>BROWSER</PanelTitle>
            <button aria-label="Hide browser"><svg width="12" height="12"><circle cx="6" cy="6" r="6" fill="#3c3c3c" /><path d="M3 6h6" stroke="#eee" strokeWidth="2" /></svg></button>
          </PanelBar>
          <TreeArea>
            <TreeScroll><TreeThumb /></TreeScroll>
            <TreeList>
              {tree.map(n => (
                <TreeItem key={n.name} $parent={n.parent}>
                  {n.parent && <Expander aria-label="Collapse Sketches"><svg width="9" height="9"><path d="M9 0v9H0z" fill="#777" stroke="#111" strokeWidth="2" /></svg></Expander>}
                  <TreeNode>
                    <EyeButton aria-label={`Toggle ${n.name}`}><Eye off={n.hidden} /></EyeButton>
                    {n.icon === 'folder'
                      ? <svg width="20" height="16" fill="#a3a3a3"><path d="M0 0h9l2 2h9v14H0z" /><path d="M0 3h10" stroke="#f2f2f2" /></svg>
                      : <SmallIcon name={n.icon} />}
                    <NodeName>{n.name}</NodeName>
                  </TreeNode>
                </TreeItem>
              ))}
            </TreeList>
          </TreeArea>
          <PanelBar>
            <CollapseSlot as="span" />
            <PanelTitle>COMMENTS</PanelTitle>
            <button aria-label="Show comments"><svg width="12" height="12"><circle cx="6" cy="6" r="6" fill="#3c3c3c" /><path d="M3 6h6M6 3v6" stroke="#eee" strokeWidth="2" /></svg></button>
          </PanelBar>
        </Sidebar>
        <ViewCube />
        <NavBar>
          {navIcons.map(n => (
            <NavButton key={n.label} $caret={n.caret} aria-label={n.label}>
              <svg width="20" height="20" viewBox="0 0 60 60">{n.art}</svg>
              {n.caret && <Caret />}
            </NavButton>
          ))}
        </NavBar>
        <Assistant aria-label="Assistant"><svg width="12" height="10"><path d="M1 9L7 2M4 9L9 3M8 9L11 5V1" stroke="#fff" strokeWidth="2" fill="none" /></svg></Assistant>
      </Viewport>

      <Timeline>
        <Transport>
          {transport.map(([name, d]) => (
            <TransportButton key={name} aria-label={name}><svg width="16" height="18" viewBox="0 -1 16 18"><path d={d} fill={c.icon} /></svg></TransportButton>
          ))}
        </Transport>
        <Track>{features.map((f, i) => <Feature key={i}><SmallIcon name={featureKinds[f]} /></Feature>)}</Track>
        <Marker><svg width="14" height="40" fill="#666"><path d="M0 0h14v7l-4 4v29H6V11L0 7z" /></svg></Marker>
        <TimelineScroll />
        <Gear aria-label="Timeline settings">
          <svg width="20" height="20" viewBox="-10 -10 20 20" fill="#858582">
            {[0, 45, 90, 135].map(a => <rect key={a} x="-2" y="-10" width="4" height="20" transform={`rotate(${a})`} />)}
            <circle r="7" /><circle r="3" fill={c.chrome} />
          </svg>
        </Gear>
      </Timeline>
    </Page>
  );
}
